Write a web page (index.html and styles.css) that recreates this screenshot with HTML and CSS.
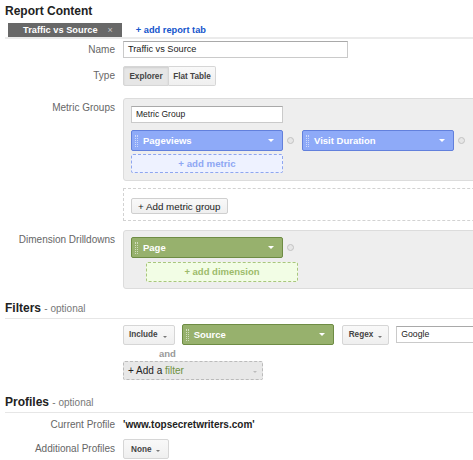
FILE: index.html
```html
<!DOCTYPE html>
<html>
<head>
<meta charset="utf-8">
<link rel="stylesheet" href="styles.css">
</head>
<body>
<div class="page">
  <h2 class="title">Report Content</h2>
  <div class="tabs">
    <span class="tab">Traffic vs Source<span class="tab-x">×</span></span>
    <span class="add-tab">+ add report tab</span>
  </div>

  <div class="row row-name">
    <div class="label">Name</div>
    <div class="field"><div class="input input-name">Traffic vs Source</div></div>
  </div>

  <div class="row row-type">
    <div class="label">Type</div>
    <div class="field">
      <div class="btn-group"><span class="btn btn-on w-explorer">Explorer</span><span class="btn w-flat">Flat Table</span></div>
    </div>
  </div>

  <div class="row row-metric">
    <div class="label label-top">Metric Groups</div>
    <div class="panel panel-metric">
      <div class="input input-group">Metric Group</div>
      <div class="pill-row">
        <div class="pill pill-blue"><span class="grip"></span><span class="pill-text">Pageviews</span><span class="caret"></span></div>
        <span class="dot"></span>
        <div class="pill pill-blue"><span class="grip"></span><span class="pill-text">Visit Duration</span><span class="caret"></span></div>
        <span class="dot"></span>
      </div>
      <div class="add-box add-metric">+ add metric</div>
    </div>
  </div>

  <div class="row row-amg">
    <div class="label"></div>
    <div class="amg-box"><span class="btn btn-amg">+ Add metric group</span></div>
  </div>

  <div class="row row-dim">
    <div class="label label-top">Dimension Drilldowns</div>
    <div class="panel panel-dim">
      <div class="pill-row pill-row-first">
        <div class="pill pill-green"><span class="grip"></span><span class="pill-text">Page</span><span class="caret"></span></div>
        <span class="dot"></span>
      </div>
      <div class="add-box add-dim">+ add dimension</div>
    </div>
  </div>

  <div class="section filters">Filters <span class="optional">- optional</span></div>

  <div class="row row-filter">
    <div class="label"></div>
    <div class="field filter-field">
      <span class="btn btn-drop btn-include">Include<span class="arr"></span></span>
      <div class="pill pill-green pill-source"><span class="grip"></span><span class="pill-text">Source</span><span class="caret"></span></div>
      <span class="btn btn-drop btn-regex">Regex<span class="arr"></span></span>
      <div class="input input-google">Google</div>
    </div>
  </div>

  <div class="row">
    <div class="label"></div>
    <div class="field">
      <div class="and">and</div>
      <div class="add-filter"><span class="af-text">+ Add a <span class="af-green">filter</span></span><span class="arr arr-light"></span></div>
    </div>
  </div>

  <div class="section profiles">Profiles <span class="optional">- optional</span></div>

  <div class="row row-current">
    <div class="label">Current Profile</div>
    <div class="field profile-value">'www.topsecretwriters.com'</div>
  </div>

  <div class="row row-additional">
    <div class="label">Additional Profiles</div>
    <div class="field field-flex"><span class="btn btn-drop btn-none">None<span class="arr"></span></span></div>
  </div>
</div>
</body>
</html>
```

FILE: styles.css
```css
html, body {
  margin: 0;
  padding: 0;
  overflow: hidden;
  background: #fff;
}
body {
  font-family: "Liberation Sans", Arial, sans-serif;
  font-size: 10px;
  color: #222;
}
.page {
  width: 540px;
  padding: 4px 0 0 5px;
}
.title {
  margin: 0;
  font-size: 12px;
  line-height: 14px;
  font-weight: bold;
  color: #222;
}
.tabs {
  margin-top: 5px;
  height: 14px;
  display: flex;
  border-bottom: 2px solid #ebebeb;
}
.tab {
  margin-left: 3px;
  background: #686868;
  color: #fff;
  font-size: 9.25px;
  font-weight: bold;
  line-height: 14px;
  padding: 0 9px 0 15px;
  display: flex;
}
.tab-x {
  margin-left: 10px;
  color: #c4c4c4;
  font-weight: normal;
  font-size: 9px;
}
.add-tab {
  margin-left: 14px;
  color: #1555cc;
  font-size: 9.25px;
  font-weight: bold;
  line-height: 14px;
}

.row {
  display: grid;
  grid-template-columns: 110px 1fr;
  column-gap: 8px;
  align-items: center;
}
.label {
  text-align: right;
  font-size: 10px;
  color: #666;
  line-height: 14px;
}
.label-top {
  align-self: start;
  padding-top: 4px;
  line-height: 12px;
}
.field {
  display: block;
}
.field-flex {
  display: flex;
  align-items: center;
}

.input {
  box-sizing: border-box;
  height: 17px;
  border: 1px solid #cacaca;
  border-top-color: #a9a9a9;
  background: #fff;
  font-size: 9.2px;
  line-height: 15px;
  padding-left: 4px;
  color: #222;
  white-space: nowrap;
}
.input-name { width: 225px; }

.row-name { margin-top: 2px; }
.row-type { margin-top: 8px; }

.btn-group { display: flex; }
.btn {
  box-sizing: border-box;
  height: 20px;
  display: inline-flex;
  align-items: center;
  justify-content: center;
  border: 1px solid #d6d6d6;
  background: linear-gradient(#f9f9f9, #efefef);
  font-size: 8.2px;
  font-weight: bold;
  color: #444;
  border-radius: 2px;
  white-space: nowrap;
}
.btn-group .btn:first-child { border-radius: 2px 0 0 2px; }
.btn-group .btn:last-child { border-left: none; border-radius: 0 2px 2px 0; }
.btn-on {
  background: #e6e6e6;
  box-shadow: inset 0 1px 2px rgba(0, 0, 0, 0.1);
}
.w-explorer { width: 46px; }
.w-flat { width: 47px; }

.row-metric { margin-top: 12px; }
.panel {
  background: #eeeeee;
  border: 1px solid #dcdcdc;
  border-radius: 3px;
  padding: 7px;
}
.input-group {
  width: 152px;
  font-size: 8.5px;
}
.pill-row {
  display: flex;
  align-items: center;
  margin-top: 7px;
}
.pill-row-first { margin-top: 0; }
.pill {
  box-sizing: border-box;
  width: 152px;
  height: 21px;
  border: 1px solid;
  border-radius: 2px;
  display: flex;
  align-items: center;
  color: #fff;
  font-size: 9.5px;
  font-weight: bold;
}
.pill-blue {
  background: #8eaaf8;
  border-color: #6280dc;
}
.pill-green {
  background: #97b16d;
  border-color: #6e8c44;
}
.grip {
  margin-left: 3px;
  width: 1px;
  height: 12px;
  border-left: 1px dotted rgba(255, 255, 255, 0.55);
  border-right: 1px dotted rgba(255, 255, 255, 0.55);
}
.pill-text {
  margin-left: 5px;
  flex: 1;
}
.caret {
  margin-right: 8px;
  width: 0;
  height: 0;
  border-left: 3px solid transparent;
  border-right: 3px solid transparent;
  border-top: 3px solid #fff;
}
.dot {
  box-sizing: border-box;
  width: 7px;
  height: 7px;
  border: 1px solid #c2c2c2;
  background: #e6e6e6;
  border-radius: 50%;
  margin: 0 8px 0 4px;
}
.add-box {
  box-sizing: border-box;
  width: 152px;
  height: 19px;
  margin-top: 3px;
  border: 1px dashed;
  border-radius: 2px;
  text-align: center;
  font-size: 9.7px;
  font-weight: bold;
  line-height: 17px;
}
.add-metric {
  background: #eef2ff;
  border-color: #8ea6f0;
  color: #8ea7f3;
}
.add-dim {
  height: 20px;
  line-height: 18px;
  margin-top: 4px;
  margin-left: 15px;
  background: #f2fde5;
  border-color: #a9c67d;
  color: #9dbb6b;
  font-size: 9.5px;
}

.row-amg { margin-top: 7px; }
.amg-box {
  box-sizing: border-box;
  height: 33px;
  border: 1px dashed #d2d2d2;
  padding: 9px 7px 0 7px;
  display: flex;
  align-items: flex-start;
}
.btn-amg {
  height: 16px;
  padding: 0 6px;
  font-size: 9.8px;
  font-weight: normal;
  color: #222;
  border-color: #cfcfcf;
}

.row-dim { margin-top: 9px; }
.panel-dim { padding: 6px 7px; }

.section {
  font-size: 12px;
  line-height: 14px;
  font-weight: bold;
  color: #222;
  padding-bottom: 2px;
  border-bottom: 1px solid #e6e6e6;
}
.optional {
  font-weight: normal;
  font-size: 10px;
  color: #777;
}
.filters { margin-top: 12px; }
.profiles { margin-top: 15px; }

.row-filter { margin-top: 5px; }
.filter-field {
  display: flex;
  align-items: center;
}
.btn-drop { justify-content: flex-start; }
.arr {
  width: 0;
  height: 0;
  border-left: 2px solid transparent;
  border-right: 2px solid transparent;
  border-top: 2px solid #777;
  margin-left: 5px;
  margin-top: 4px;
}
.btn-include { padding: 0 7px 0 5px; }
.pill-source { margin-left: 7px; }
.btn-regex { margin-left: 8px; padding: 0 6px 0 6px; }
.input-google {
  margin-left: 7px;
  width: 100px;
  font-size: 8.7px;
}

.and {
  margin: 3px 0 0 36px;
  font-size: 9.5px;
  font-weight: bold;
  color: #999;
  line-height: 12px;
}
.add-filter {
  margin-top: 1px;
  box-sizing: border-box;
  width: 140px;
  height: 19px;
  border: 1px dashed #bbb;
  border-radius: 2px;
  background: #e8e8e8;
  display: flex;
  align-items: center;
  padding: 0 5px 0 4px;
  font-size: 10px;
  color: #222;
}
.af-text { flex: 1; }
.af-green { color: #6d9140; }
.arr-light { border-top-color: #bbb; margin-top: 2px; }

.row-current { margin-top: 5px; }
.profile-value {
  font-size: 10px;
  font-weight: bold;
  line-height: 14px;
  color: #222;
}
.row-additional { margin-top: 7px; }
.btn-none { padding: 0 8px 0 7px; }
```
